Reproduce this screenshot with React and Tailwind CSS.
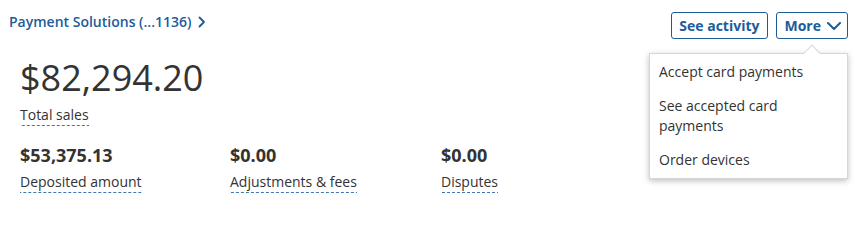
import React from "react";

const stats = [
  { value: "$53,375.13", label: "Deposited amount" },
  { value: "$0.00", label: "Adjustments & fees" },
  { value: "$0.00", label: "Disputes" },
];

const menuItems = ["Accept card payments", "See accepted card payments", "Order devices"];

function ChevronRight() {
  return (
    <svg width="8" height="12" viewBox="0 0 8 12" fill="none">
      <path d="M1.5 1.5L6 6l-4.5 4.5" stroke="#1d5c99" strokeWidth="1.8" strokeLinecap="round" strokeLinejoin="round" />
    </svg>
  );
}

function ChevronDown() {
  return (
    <svg width="14" height="8" viewBox="0 0 14 8" fill="none">
      <path d="M1 1l6 6 6-6" stroke="#1d5c99" strokeWidth="2" strokeLinecap="round" strokeLinejoin="round" />
    </svg>
  );
}

// dotted underline used under each figure's label
function Label({ children }) {
  return (
    <span className="inline-block text-[14px] leading-[20px] text-[#333] pb-[1px] bg-[linear-gradient(to_right,#3b78b4_3px,transparent_3px)] bg-[length:5px_1px] bg-repeat-x bg-bottom">
      {children}
    </span>
  );
}

export default function App() {
  return (
    <div className="w-[860px] h-[207px] bg-white font-['Open_Sans',sans-serif] text-[#333] overflow-hidden">
      <div className="flex justify-between items-start pl-[9px] pr-[12px] pt-[12px]">
        <a className="flex items-center gap-[7px] text-[14px] leading-[19px] font-semibold text-[#1d5c99]">
          Payment Solutions (...1136)
          <ChevronRight />
        </a>

        <div className="flex gap-[8px] relative">
          <button className="h-[27px] px-[7px] border border-[#1d5c99] rounded-[3px] text-[14px] font-bold text-[#1d5c99] leading-none">
            See activity
          </button>
          <button className="h-[27px] pl-[8px] pr-[6px] flex items-center gap-[6px] border border-[#1d5c99] rounded-[3px] text-[14px] font-bold text-[#1d5c99] leading-none">
            More
            <ChevronDown />
          </button>

          {/* dropdown menu */}
          <div className="absolute right-0 top-[41px] w-[199px] bg-white border border-[#d6d6d6] shadow-[0_2px_6px_rgba(0,0,0,0.25)] py-[1px] z-10">
            <div className="absolute -top-[7px] right-[29px] w-[12px] h-[12px] bg-white border-t border-l border-[#d6d6d6] rotate-45" />
            {menuItems.map((item) => (
              <div key={item} className="relative px-[9px] py-[7px] text-[14px] leading-[20px] text-[#333]">
                {item}
              </div>
            ))}
          </div>
        </div>
      </div>

      <div className="pl-[20px]">
        <div className="mt-[17px] text-[36px] leading-[44px] text-[#333]">$82,294.20</div>
        <div className="mt-[2px]">
          <Label>Total sales</Label>
        </div>

        <div className="mt-[18px] grid grid-cols-[210px_211px_210px]">
          {stats.map((s, i) => (
            <div key={i}>
              <div className="text-[18px] leading-[22px] font-bold text-[#333]">{s.value}</div>
              <div className="mt-[3px]">
                <Label>{s.label}</Label>
              </div>
            </div>
          ))}
        </div>
      </div>
    </div>
  );
}
